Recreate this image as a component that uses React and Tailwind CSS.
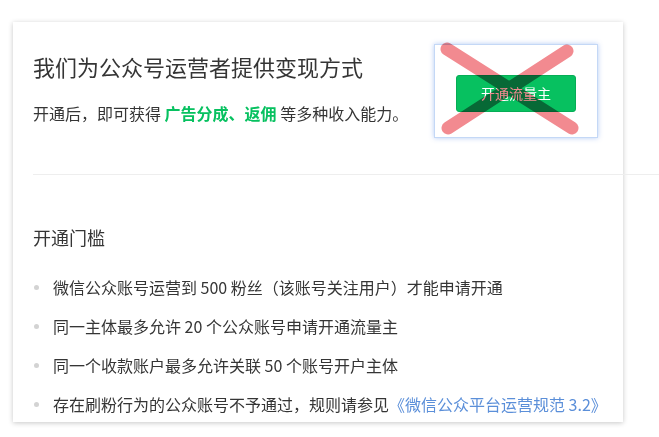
import React from 'react';

const rules = [
  '微信公众账号运营到 500 粉丝（该账号关注用户）才能申请开通',
  '同一主体最多允许 20 个公众账号申请开通流量主',
  '同一个收款账户最多允许关联 50 个账号开户主体',
];

const App = () => {
  return (
    <div
      className="w-[659px] h-[437px] bg-white overflow-hidden text-[#353535]"
      style={{ fontFamily: '"Noto Sans CJK SC", "Noto Sans", sans-serif' }}
    >
      <div className="mt-[22px] ml-[13px] w-[610px] h-[400px] bg-white shadow-[0_1px_5px_rgba(0,0,0,0.22)]">
        {/* Header */}
        <div className="flex justify-between items-start h-[152px] pl-[20px] pr-[25px]">
          <div className="pt-[29px]">
            <h1 className="text-[22px] leading-[30px] font-normal">我们为公众号运营者提供变现方式</h1>
            <p className="mt-[20px] text-[16px] leading-[24px]">
              开通后，即可获得 <span className="font-bold text-[#07c160]">广告分成、返佣</span> 等多种收入能力。
            </p>
          </div>

          <div className="relative mt-[22px] w-[164px] h-[94px] bg-white border border-[#c4d8f6] shadow-[0_0_5px_rgba(90,140,230,0.45)] pt-[30px] flex justify-center">
            <button className="w-[120px] h-[37px] rounded-[3px] bg-[#07c160] border border-[#06ad56] text-white text-[14px] leading-[35px]">
              开通流量主
            </button>
            <svg
              className="absolute left-0 top-0 overflow-visible mix-blend-multiply pointer-events-none"
              width="164"
              height="94"
            >
              <line x1="12" y1="4" x2="137" y2="83" stroke="#f28a90" strokeWidth="13" strokeLinecap="round" />
              <line x1="132" y1="6" x2="13" y2="83" stroke="#f28a90" strokeWidth="13" strokeLinecap="round" />
            </svg>
          </div>
        </div>

        <div className="ml-[20px] mr-[-36px] h-px bg-[#eeeeee]" />

        {/* Requirements */}
        <div className="pl-[20px]">
          <h2 className="mt-[49px] text-[18px] leading-[26px] font-normal">开通门槛</h2>
          <ul className="mt-[25px] flex flex-col gap-[15px] text-[16px] leading-[24px]">
            {rules.map((r) => (
              <li key={r} className="flex items-center gap-[14px]">
                <span className="ml-[1px] w-[5px] h-[5px] rounded-full bg-[#d3d3d3]" />
                <span>{r}</span>
              </li>
            ))}
            <li className="flex items-center gap-[14px]">
              <span className="ml-[1px] w-[5px] h-[5px] rounded-full bg-[#d3d3d3]" />
              <span>
                存在刷粉行为的公众账号不予通过，规则请参见
                <a className="text-[#5b8fd9]">《微信公众平台运营规范 3.2》</a>
              </span>
            </li>
          </ul>
        </div>
      </div>
    </div>
  );
};

export default App;
